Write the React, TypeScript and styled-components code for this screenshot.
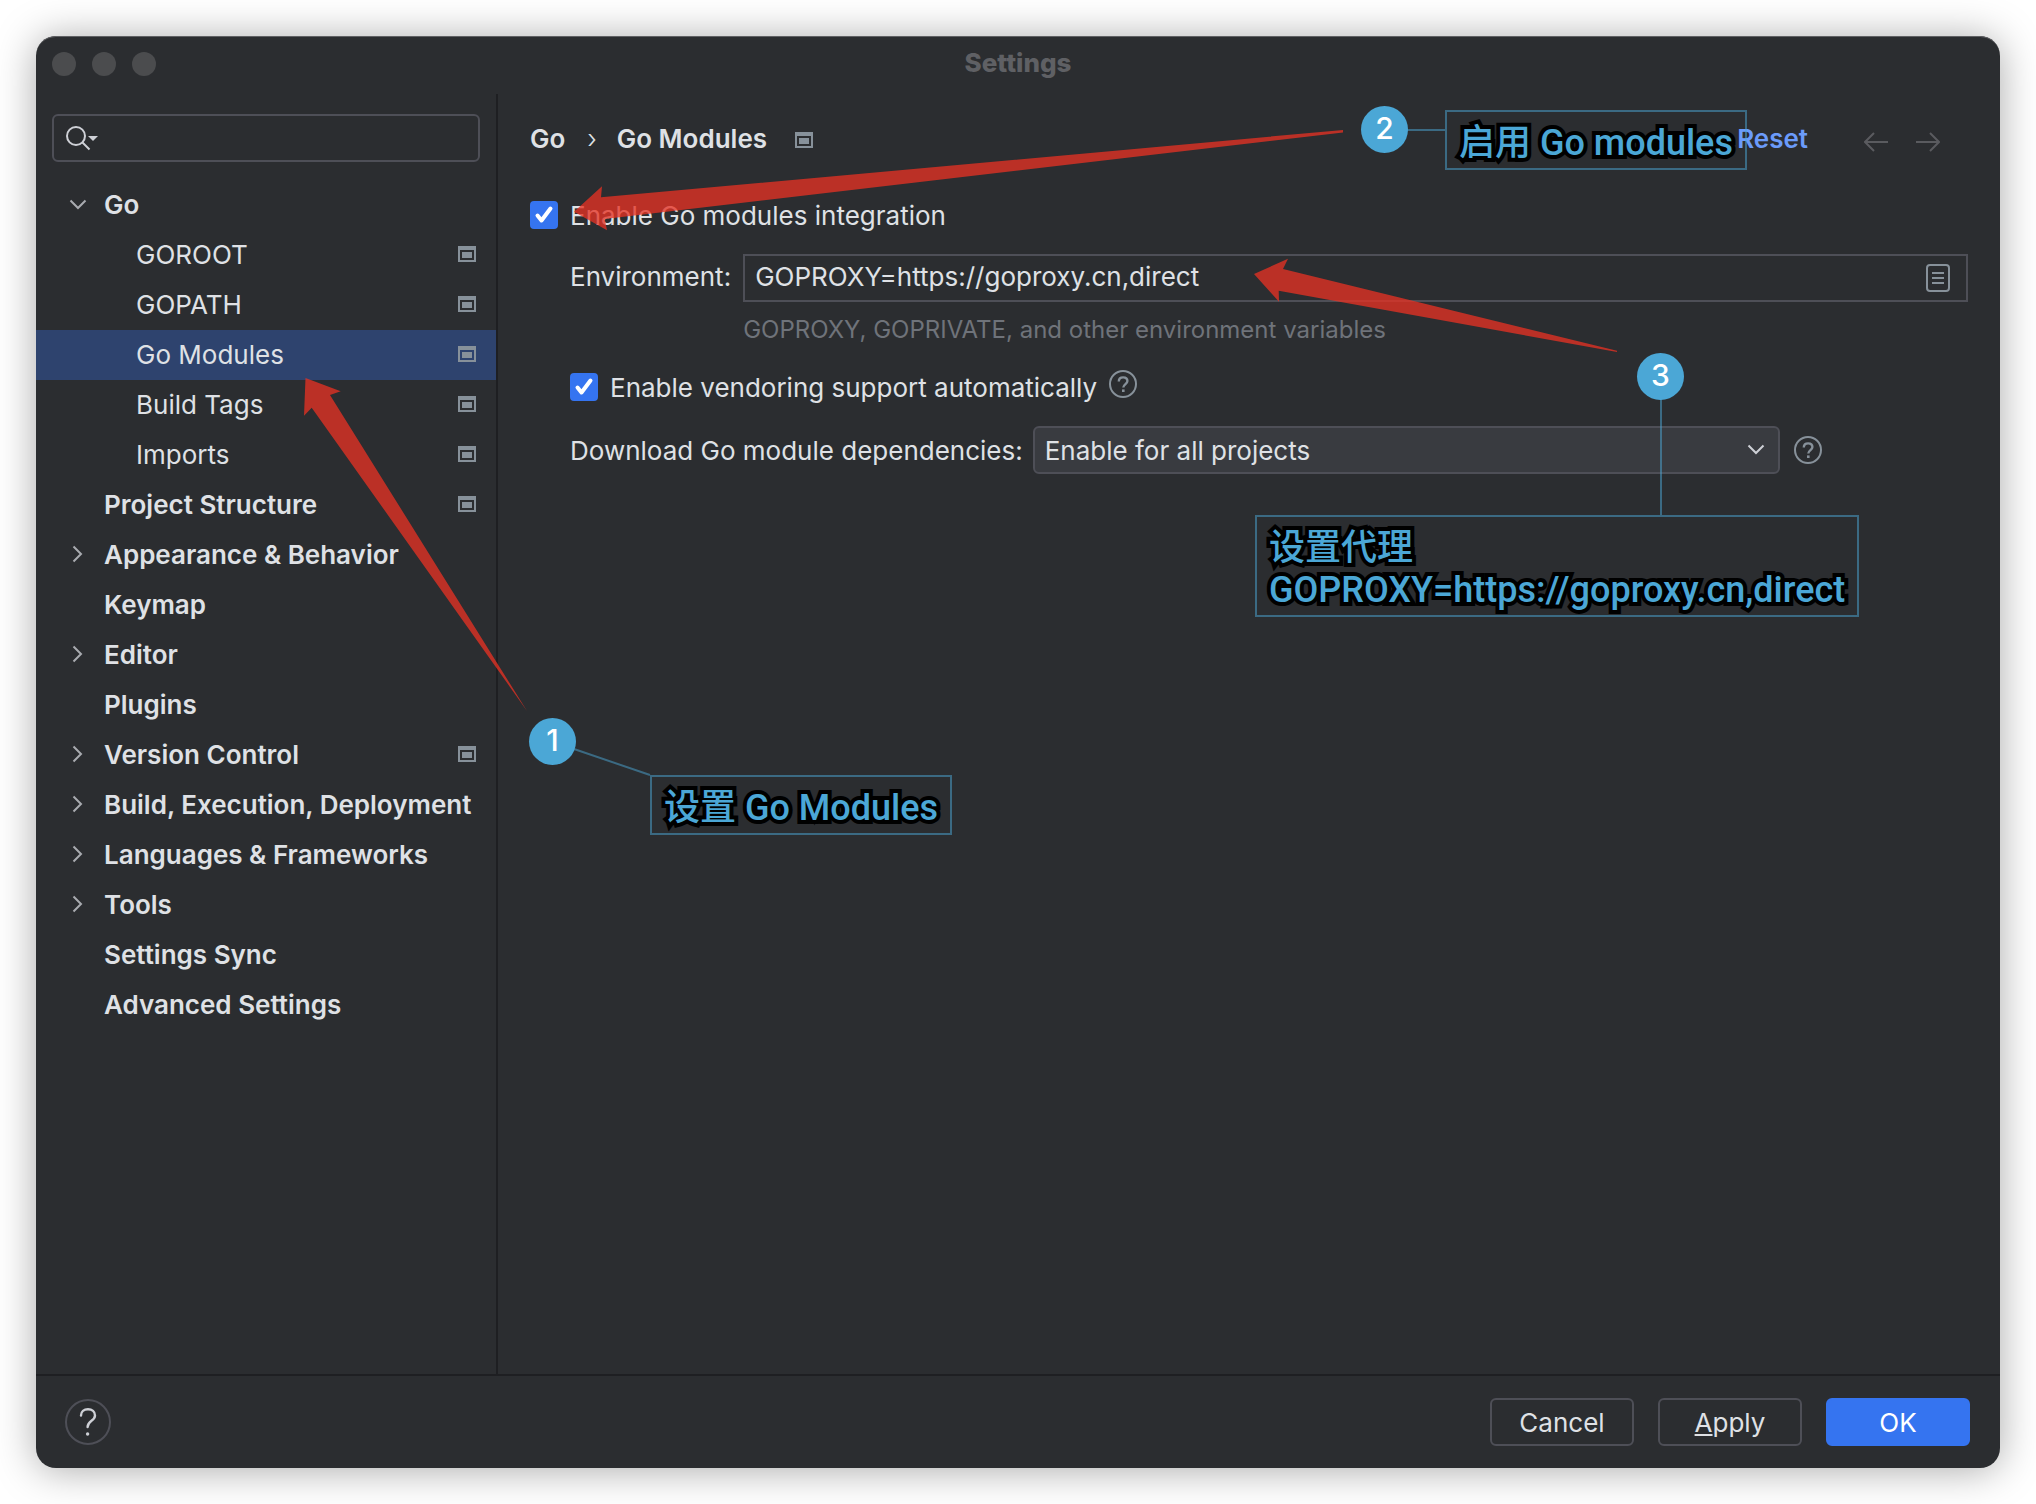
import React, { useState } from "react";
import styled, { createGlobalStyle, css } from "styled-components";

const color = {
  surface: "#2b2d30",
  line: "#1e1f22",
  border: "#4e4f57",
  text: "#dfe1e5",
  muted: "#6f737a",
  icon: "#87919a",
  blue: "#3574f0",
  selection: "#2e436e",
  link: "#6b9bfa",
  note: "#4ba7d6",
  noteLine: "rgba(75, 167, 214, 0.5)",
  arrow: "rgba(230, 49, 35, 0.77)",
};

const GlobalStyle = createGlobalStyle`
  *, *::before, *::after { box-sizing: border-box; }
  body {
    margin: 0;
    background: #ffffff;
    color: ${color.text};
    font: 400 26px/32px Inter, "Noto Sans CJK SC", sans-serif;
  }
  button, input, select { font: inherit; color: inherit; margin: 0; }
  ul { list-style: none; margin: 0; padding: 0; }
  svg { display: block; flex: none; }
`;

const Desktop = styled.div`
  display: flex;
  min-height: 100vh;
  padding: 36px;
`;

const Window = styled.div`
  position: relative;
  flex: 1;
  min-width: 0;
  display: flex;
  flex-direction: column;
  background: ${color.surface};
  border-radius: 20px;
  box-shadow: 0 2px 40px rgba(0, 0, 0, 0.34), inset 0 2px 0 -1px #606164;
`;

const TitleBar = styled.header`
  display: grid;
  grid-template-columns: 1fr auto 1fr;
  align-items: center;
  height: 58px;
  padding: 0 16px 2px;
`;

const Lights = styled.div`
  display: flex;
  gap: 16px;
`;

const Light = styled.button`
  width: 24px;
  height: 24px;
  padding: 0;
  border: 0;
  border-radius: 50%;
  background: #4b4c4e;
`;

const Title = styled.h1`
  margin: 0;
  padding-bottom: 2px;
  font-size: 26px;
  line-height: 32px;
  font-weight: 800;
  color: #5f6064;
`;

const Body = styled.div`
  flex: 1;
  display: flex;
  min-height: 0;
`;

const Sidebar = styled.aside`
  flex: none;
  width: 462px;
  border-right: 2px solid ${color.line};
`;

const SearchBox = styled.label`
  display: flex;
  align-items: center;
  gap: 8px;
  height: 48px;
  margin: 20px 16px 18px;
  padding: 0 10px;
  border: 2px solid ${color.border};
  border-radius: 6px;
`;

const PlainInput = styled.input`
  flex: 1;
  min-width: 0;
  height: 32px;
  padding: 0 0 2px;
  border: 0;
  outline: 0;
  background: transparent;
`;

const Row = styled.button<{ $child?: boolean; $selected?: boolean }>`
  display: flex;
  align-items: center;
  width: 100%;
  height: 50px;
  border: 0;
  padding: 0 20px 0 ${(p) => (p.$child ? 100 : 32)}px;
  text-align: left;
  white-space: nowrap;
  font-weight: ${(p) => (p.$child ? 400 : 600)};
  background: ${(p) => (p.$selected ? color.selection : "transparent")};

  > svg { margin-bottom: 2px; }
`;

const Twisty = styled.span`
  flex: none;
  width: 36px;
  height: 20px;
`;

const RowLabel = styled.span`
  flex: 1;
`;

const Content = styled.main`
  flex: 1;
  min-width: 0;
  padding: 20px 32px;
`;

const HeaderRow = styled.div`
  display: flex;
  align-items: center;
  height: 50px;
  font-weight: 600;
`;

const Crumbs = styled.nav`
  flex: 1;
  display: flex;
  align-items: center;
  gap: 20px;
`;

const CrumbSeparator = styled.span`
  padding-left: 2px;
  font-weight: 300;
`;

const CrumbIcon = styled.span`
  padding: 2px 0 0 8px;
`;

const ResetLink = styled.a`
  color: ${color.link};
  text-decoration: none;
`;

const History = styled.div`
  display: flex;
  gap: 28px;
  padding: 6px 28px 0 56px;
`;

const IconButton = styled.button`
  flex: none;
  padding: 0;
  border: 0;
  background: transparent;
`;

const Form = styled.form`
  display: flex;
  flex-direction: column;
  padding-top: 34px;
`;

const Indented = styled.div`
  display: flex;
  flex-direction: column;
  padding: 24px 0 0 40px;
`;

const CheckRow = styled.div`
  display: flex;
  align-items: flex-start;
  height: 32px;
`;

const CheckLabel = styled.label`
  display: flex;
  align-items: center;
  gap: 12px;
  padding: 0 12px 0 0;
`;

const CheckText = styled.span`
  padding-top: 2px;
`;

const CheckBox = styled.input`
  appearance: none;
  flex: none;
  width: 28px;
  height: 28px;
  margin: 0;
  border: 2px solid ${color.border};
  border-radius: 4px;

  &:checked {
    border-color: ${color.blue};
    background: ${color.blue};
  }
`;

const CheckWrap = styled.span`
  display: grid;
  > * { grid-area: 1 / 1; }
  > svg { pointer-events: none; }
`;

const FieldGrid = styled.div`
  display: grid;
  grid-template-columns: auto 1fr;
  column-gap: 12px;
  align-items: center;
  padding-bottom: 26px;
`;

const FieldLabel = styled.label`
  padding-bottom: 2px;
`;

const TextField = styled.div`
  display: flex;
  align-items: center;
  height: 48px;
  padding: 0 16px 0 10px;
  border: 2px solid ${color.border};
`;

const Comment = styled.p`
  grid-column: 2;
  margin: 14px 0 0;
  font-size: 24px;
  line-height: 28px;
  color: ${color.muted};
`;

const SelectRow = styled.div`
  display: flex;
  align-items: center;
  padding: 24px 146px 0 0;
`;

const SelectLabel = styled.label`
  padding: 2px 10px 0 0;
`;

const SelectWrap = styled.div`
  flex: 1;
  display: grid;
  align-items: center;
  margin-right: 14px;
  > * { grid-area: 1 / 1; }
  > svg {
    justify-self: end;
    margin-right: 14px;
    pointer-events: none;
  }
`;

const Select = styled.select`
  appearance: none;
  width: 100%;
  height: 48px;
  padding: 2px 40px 0 10px;
  border: 2px solid ${color.border};
  border-radius: 6px;
  background: #393b40;
  outline: 0;
`;

const Footer = styled.footer`
  display: flex;
  align-items: center;
  gap: 24px;
  height: 94px;
  padding: 0 30px 0 29px;
  border-top: 2px solid ${color.line};
`;

const HelpButton = styled.button`
  display: grid;
  place-items: center;
  width: 46px;
  height: 46px;
  margin-right: auto;
  padding: 0;
  border: 2px solid ${color.border};
  border-radius: 50%;
  background: transparent;
`;

const Button = styled.button<{ $primary?: boolean }>`
  width: 144px;
  height: 48px;
  padding: 2px 0 0;
  border: 2px solid ${color.border};
  border-radius: 6px;
  background: transparent;
  ${(p) =>
    p.$primary &&
    css`
      border-color: ${color.blue};
      background: ${color.blue};
      color: #ffffff;
    `}
`;

const Mnemonic = styled.span`
  text-decoration: underline;
  text-decoration-thickness: 2px;
  text-underline-offset: 2px;
`;

const Drawing = styled.svg`
  position: absolute;
  inset: 0;
  width: 100%;
  height: 100%;
  pointer-events: none;
`;

const Badge = styled.span<{ $x: number; $y: number }>`
  position: absolute;
  left: ${(p) => p.$x}px;
  top: ${(p) => p.$y}px;
  width: 47px;
  height: 47px;
  border-radius: 50%;
  background: ${color.note};
  color: #ffffff;
  font-size: 30px;
  line-height: 45px;
  font-weight: 500;
  text-align: center;
`;

const Note = styled.div<{ $x: number; $y: number }>`
  position: absolute;
  left: ${(p) => p.$x}px;
  top: ${(p) => p.$y}px;
  padding: 10px 12px 4px;
  border: 2px solid ${color.noteLine};
  color: ${color.note};
  font: 500 36px/42px Roboto, "Noto Sans CJK SC", sans-serif;
  white-space: pre;
  -webkit-text-stroke: 8px #000000;
  paint-order: stroke fill;
  pointer-events: none;
`;

const ScopeIcon = () => (
  <svg width="18" height="16" viewBox="0 0 18 16" fill={color.icon} aria-hidden="true">
    <path fillRule="evenodd" d="M0 0H18V16H0ZM2 4V14H16V4Z" />
    <rect x="4" y="6" width="10" height="6" />
  </svg>
);

const Chevron = ({ open, tint = "#a9abb0" }: { open?: boolean; tint?: string }) => (
  <svg width="20" height="20" viewBox="0 0 20 20" fill="none" stroke={tint} strokeWidth="2" aria-hidden="true">
    {open ? <path d="M2.5 5.5L10 13L17.5 5.5" /> : <path d="M5.5 1.5L13 9L5.5 16.5" />}
  </svg>
);

const SearchIcon = () => (
  <svg width="34" height="26" viewBox="0 0 34 26" fill="none" stroke="#ced0d6" strokeWidth="2" aria-hidden="true">
    <circle cx="12" cy="11" r="9" />
    <path d="M18.5 17.5L25.5 24.5" />
    <path d="M24 11H34L29 16Z" fill="#ced0d6" stroke="none" />
  </svg>
);

const CheckMark = () => (
  <svg width="28" height="28" viewBox="0 0 28 28" fill="none" stroke="#ffffff" strokeWidth="4" strokeLinecap="round" strokeLinejoin="round" aria-hidden="true">
    <path d="M7.5 14.5L11.5 19.5L20.5 7.5" />
  </svg>
);

const HelpIcon = () => (
  <svg width="28" height="28" viewBox="0 0 28 28" fill="none" stroke={color.icon} strokeWidth="2" aria-hidden="true">
    <circle cx="14" cy="14" r="13" />
    <path strokeWidth="2.4" d="M9.8 11.6C9.8 9 11.6 7.4 14.1 7.4C16.6 7.4 18.4 8.9 18.4 11.1C18.4 14 14.3 14.2 14.3 17.6" />
    <rect x="13" y="19.4" width="2.6" height="2.6" fill={color.icon} stroke="none" />
  </svg>
);

const BigHelp = () => (
  <svg width="20" height="30" viewBox="0 0 20 30" fill="none" stroke="#ced0d6" strokeWidth="2.4" strokeLinecap="round" aria-hidden="true">
    <path d="M3 8.5C3 4.5 6 2.2 10 2.2C14 2.2 17 4.5 17 8.4C17 14 9.6 13.6 9.6 20" />
    <circle cx="9.6" cy="27" r="1.7" fill="#ced0d6" stroke="none" />
  </svg>
);

const ListIcon = () => (
  <svg width="24" height="28" viewBox="0 0 24 28" fill="none" stroke={color.icon} strokeWidth="2" aria-hidden="true">
    <rect x="1" y="1" width="22" height="26" rx="3" />
    <path d="M6 9H18M6 14H18M6 19H18" />
  </svg>
);

const ArrowIcon = ({ forward }: { forward?: boolean }) => (
  <svg width="24" height="20" viewBox="0 0 24 20" fill="none" stroke="#5a5b5f" strokeWidth="2" aria-hidden="true">
    {forward ? <path d="M0 10H22.5M14 1L23 10L14 19" /> : <path d="M24 10H1.5M10 1L1 10L10 19" />}
  </svg>
);

type Item = { label: string; child?: boolean; open?: boolean; folder?: boolean; scoped?: boolean };

const items: Item[] = [
  { label: "Go", folder: true, open: true },
  { label: "GOROOT", child: true, scoped: true },
  { label: "GOPATH", child: true, scoped: true },
  { label: "Go Modules", child: true, scoped: true },
  { label: "Build Tags", child: true, scoped: true },
  { label: "Imports", child: true, scoped: true },
  { label: "Project Structure", scoped: true },
  { label: "Appearance & Behavior", folder: true },
  { label: "Keymap" },
  { label: "Editor", folder: true },
  { label: "Plugins" },
  { label: "Version Control", folder: true, scoped: true },
  { label: "Build, Execution, Deployment", folder: true },
  { label: "Languages & Frameworks", folder: true },
  { label: "Tools", folder: true },
  { label: "Settings Sync" },
  { label: "Advanced Settings" },
];

function Check({ id, label }: { id: string; label: string }) {
  return (
    <CheckLabel htmlFor={id}>
      <CheckWrap>
        <CheckBox id={id} type="checkbox" defaultChecked />
        <CheckMark />
      </CheckWrap>
      <CheckText>{label}</CheckText>
    </CheckLabel>
  );
}

function Annotations() {
  return (
    <>
      <Drawing aria-hidden="true">
        <g fill={color.arrow}>
          <path d="M269.5 342L304.7 355.3L294 359L491 675L275.7 371.7L268 379.7Z" />
          <path d="M538 175.7L566 150.3L565 161.3L1307 94V96.5L568.7 183L571 194.3Z" />
          <path d="M1218 238L1252 222.7L1247 233L1581 314.7V316L1242.7 254.7L1243 265.7Z" />
        </g>
        <path
          d="M538 713L614 739M1371 94H1409M1625 363V479"
          fill="none"
          stroke={color.noteLine}
          strokeWidth="2"
        />
      </Drawing>
      <Badge $x={493} $y={682}>1</Badge>
      <Badge $x={1325} $y={70}>2</Badge>
      <Badge $x={1601} $y={317}>3</Badge>
      <Note $x={614} $y={739}>设置 Go Modules</Note>
      <Note $x={1409} $y={74}>启用 Go modules</Note>
      <Note $x={1219} $y={479}>{"设置代理\nGOPROXY=https://goproxy.cn,direct"}</Note>
    </>
  );
}

export default function App() {
  const [selected, setSelected] = useState("Go Modules");
  return (
    <>
      <GlobalStyle />
      <Desktop>
        <Window>
          <TitleBar>
            <Lights>
              <Light aria-label="Close" />
              <Light aria-label="Minimize" />
              <Light aria-label="Zoom" />
            </Lights>
            <Title>Settings</Title>
          </TitleBar>
          <Body>
            <Sidebar>
              <SearchBox>
                <SearchIcon />
                <PlainInput type="text" aria-label="Search settings" />
              </SearchBox>
              <ul>
                {items.map((item) => (
                  <li key={item.label}>
                    <Row
                      $child={item.child}
                      $selected={item.label === selected}
                      onClick={() => setSelected(item.label)}
                    >
                      {!item.child && <Twisty>{item.folder && <Chevron open={item.open} />}</Twisty>}
                      <RowLabel>{item.label}</RowLabel>
                      {item.scoped && <ScopeIcon />}
                    </Row>
                  </li>
                ))}
              </ul>
            </Sidebar>
            <Content>
              <HeaderRow>
                <Crumbs aria-label="Breadcrumb">
                  <span>Go</span>
                  <CrumbSeparator>›</CrumbSeparator>
                  <span>Go Modules</span>
                  <CrumbIcon><ScopeIcon /></CrumbIcon>
                </Crumbs>
                <ResetLink href="#reset">Reset</ResetLink>
                <History>
                  <IconButton aria-label="Back"><ArrowIcon /></IconButton>
                  <IconButton aria-label="Forward"><ArrowIcon forward /></IconButton>
                </History>
              </HeaderRow>
              <Form onSubmit={(e) => e.preventDefault()}>
                <CheckRow>
                  <Check id="modules" label="Enable Go modules integration" />
                </CheckRow>
                <Indented>
                  <FieldGrid>
                    <FieldLabel htmlFor="env">Environment:</FieldLabel>
                    <TextField>
                      <PlainInput id="env" type="text" defaultValue="GOPROXY=https://goproxy.cn,direct" />
                      <IconButton type="button" aria-label="Edit variables"><ListIcon /></IconButton>
                    </TextField>
                    <Comment>GOPROXY, GOPRIVATE, and other environment variables</Comment>
                  </FieldGrid>
                  <CheckRow>
                    <Check id="vendoring" label="Enable vendoring support automatically" />
                    <IconButton type="button" aria-label="About vendoring"><HelpIcon /></IconButton>
                  </CheckRow>
                  <SelectRow>
                    <SelectLabel htmlFor="download">Download Go module dependencies:</SelectLabel>
                    <SelectWrap>
                      <Select id="download">
                        <option>Enable for all projects</option>
                      </Select>
                      <Chevron open tint="#ced0d6" />
                    </SelectWrap>
                    <IconButton type="button" aria-label="About downloads"><HelpIcon /></IconButton>
                  </SelectRow>
                </Indented>
              </Form>
            </Content>
          </Body>
          <Footer>
            <HelpButton aria-label="Help"><BigHelp /></HelpButton>
            <Button>Cancel</Button>
            <Button><Mnemonic>A</Mnemonic>pply</Button>
            <Button $primary>OK</Button>
          </Footer>
          <Annotations />
        </Window>
      </Desktop>
    </>
  );
}
